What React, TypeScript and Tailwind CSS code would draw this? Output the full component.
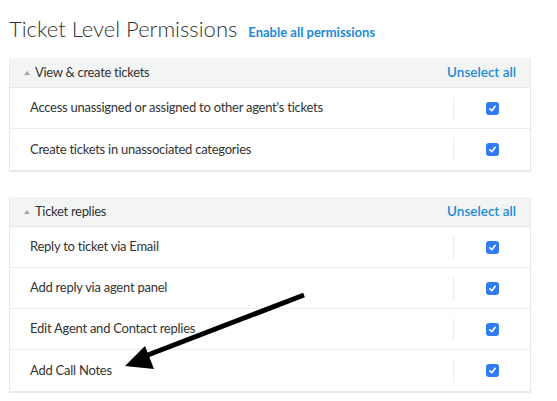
const sections = [
  {
    title: 'View & create tickets',
    rows: ["Access unassigned or assigned to other agent's tickets", 'Create tickets in unassociated categories'],
  },
  {
    title: 'Ticket replies',
    rows: ['Reply to ticket via Email', 'Add reply via agent panel', 'Edit Agent and Contact replies', 'Add Call Notes'],
  },
];

function Check() {
  return (
    <span className="flex h-[13px] w-[13px] items-center justify-center rounded-[3px] bg-[#2f7cf5]">
      <svg width="9" height="9" viewBox="0 0 10 10" fill="none">
        <path d="M2 5.3 L4.2 7.4 L8 2.6" stroke="white" strokeWidth="1.8" strokeLinecap="round" strokeLinejoin="round" />
      </svg>
    </span>
  );
}

function Panel({ title, rows }: { title: string; rows: string[] }) {
  return (
    <div className="w-[522px] rounded-t-[3px] border-x border-b-2 border-[#e8e9e9] bg-white">
      {/* header */}
      <div className="flex h-[30px] items-center justify-between rounded-t-[3px] border-b border-[#e6e7e7] bg-[#f3f4f4] pl-[14px] pr-[14px]">
        <div className="flex items-center gap-[5px]">
          <span className="h-0 w-0 border-x-[3.5px] border-b-[4px] border-x-transparent border-b-[#a6a6a6]" />
          <span className="text-[13px] tracking-[-0.3px] text-[#333]">{title}</span>
        </div>
        <span className="text-[13.5px] font-semibold text-[#1b8ad8]">Unselect all</span>
      </div>
      {rows.map((r, i) => (
        <div key={r} className={`flex h-[41px] items-center ${i < rows.length - 1 ? 'border-b border-[#ececec]' : ''}`}>
          <span className="flex-1 pl-[20px] text-[13px] tracking-[-0.25px] text-[#333]">{r}</span>
          <span className="h-[23px] w-px bg-[#ececec]" />
          <span className="flex w-[76px] justify-center">
            <Check />
          </span>
        </div>
      ))}
    </div>
  );
}

export default function App() {
  return (
    <div className="relative h-[401px] w-[557px] bg-white pl-[9px] pt-[14px] font-['Lato',sans-serif]">
      <div className="flex items-baseline gap-[11px]">
        <h1 className="text-[22px] font-light leading-[30px] text-[#333]">Ticket Level Permissions</h1>
        <span className="text-[13px] font-bold text-[#1b8ad8]">Enable all permissions</span>
      </div>
      <div className="mt-[14px] flex flex-col gap-[25px]">
        {sections.map((s) => (
          <Panel key={s.title} title={s.title} rows={s.rows} />
        ))}
      </div>
      {/* annotation arrow */}
      <svg className="pointer-events-none absolute left-0 top-0" width="557" height="401">
        <line x1="304" y1="295" x2="140" y2="358" stroke="black" strokeWidth="5" />
        <polygon points="125,366 145,346 154,369" fill="black" />
      </svg>
    </div>
  );
}
